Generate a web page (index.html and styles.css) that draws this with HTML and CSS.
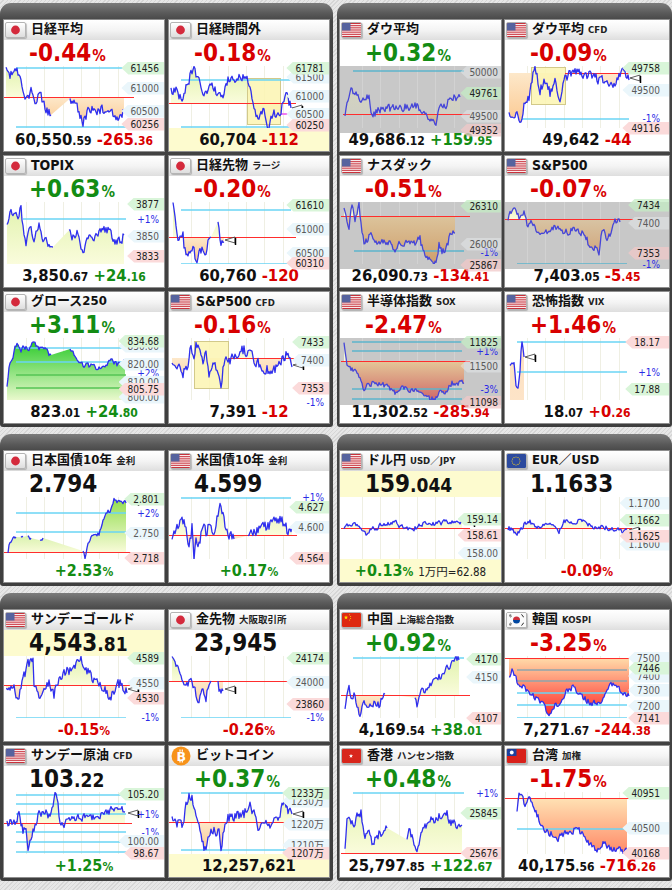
FILE: index.html
```html
<!DOCTYPE html>
<html lang="ja">
<head>
<meta charset="utf-8">
<title>マーケット</title>
<link rel="stylesheet" href="styles.css">
</head>
<body>
<div class="page">

<div class="sec">
 <div class="panel l"><div class="grid">

  <div class="card">
   <div class="hd"><span class="flag jp"><svg viewBox="0 0 19 14"><circle cx="9.5" cy="7" r="4.4" fill="#d42a3c"/></svg></span><span class="ttl">日経平均</span></div>
   <div class="top dn">-0.44<small>%</small></div>
   <div class="chart" data-id="c1">
    <span class="tag l" style="top:61.5px">61000</span><span class="tag l" style="top:84.5px">60500</span><span class="tag g" style="top:41.5px">61456</span><span class="tag p" style="top:97.5px">60256</span>
   </div>
   <div class="bot">60,550<small>.59</small> <span class="dn">-265<small>.36</small></span></div>
  </div>

  <div class="card">
   <div class="hd"><span class="flag jp"><svg viewBox="0 0 19 14"><circle cx="9.5" cy="7" r="4.4" fill="#d42a3c"/></svg></span><span class="ttl">日経時間外</span></div>
   <div class="top dn">-0.18<small>%</small></div>
   <div class="chart" data-id="c2">
    <span class="tag l" style="top:50.5px">61500</span><span class="tag l" style="top:69.5px">61000</span><span class="tag l" style="top:87.5px">60500</span><span class="tag g" style="top:41.5px">61781</span><span class="tag p" style="top:98.5px">60250</span>
   </div>
   <div class="bot yl">60,704 <span class="dn">-112</span></div>
  </div>

  <div class="card">
   <div class="hd"><span class="flag jp"><svg viewBox="0 0 19 14"><circle cx="9.5" cy="7" r="4.4" fill="#d42a3c"/></svg></span><span class="ttl lt">TOPIX</span></div>
   <div class="top up">+0.63<small>%</small></div>
   <div class="chart" data-id="c5">
    <span class="tag b" style="top:56.5px">+1%</span><span class="tag l" style="top:73.5px">3850</span><span class="tag g" style="top:41.5px">3877</span><span class="tag p" style="top:93.5px">3833</span>
   </div>
   <div class="bot">3,850<small>.67</small> <span class="up">+24<small>.16</small></span></div>
  </div>

  <div class="card">
   <div class="hd"><span class="flag jp"><svg viewBox="0 0 19 14"><circle cx="9.5" cy="7" r="4.4" fill="#d42a3c"/></svg></span><span class="ttl">日経先物<span class="sub">ラージ</span></span></div>
   <div class="top dn">-0.20<small>%</small></div>
   <div class="chart" data-id="c6">
    <span class="tag l" style="top:66.5px">61000</span><span class="tag l" style="top:90.5px">60500</span><span class="tag g" style="top:42.5px">61610</span><span class="tag p" style="top:100.5px">60310</span>
   </div>
   <div class="bot">60,760 <span class="dn">-120</span></div>
  </div>

  <div class="card">
   <div class="hd"><span class="flag jp"><svg viewBox="0 0 19 14"><circle cx="9.5" cy="7" r="4.4" fill="#d42a3c"/></svg></span><span class="ttl">グロース250</span></div>
   <div class="top up">+3.11<small>%</small></div>
   <div class="chart" data-id="c9">
    <span class="tag l" style="top:47.5px">830.00</span><span class="tag l" style="top:65.5px">820.00</span><span class="tag b" style="top:74.5px">+2%</span><span class="tag l" style="top:83.5px">810.00</span><span class="tag l" style="top:98.5px">800.00</span><span class="tag g" style="top:42.5px">834.68</span><span class="tag p" style="top:90.5px">805.75</span>
   </div>
   <div class="bot">823<small>.01</small> <span class="up">+24<small>.80</small></span></div>
  </div>

  <div class="card">
   <div class="hd"><span class="flag us"><svg viewBox="0 0 19 14"><rect width="19" height="14" fill="#fff"/><g fill="#c8323c"><rect width="19" height="1.1"/><rect y="2.15" width="19" height="1.1"/><rect y="4.3" width="19" height="1.1"/><rect y="6.45" width="19" height="1.1"/><rect y="8.6" width="19" height="1.1"/><rect y="10.75" width="19" height="1.1"/><rect y="12.9" width="19" height="1.1"/></g><rect width="8.5" height="7.5" fill="#56639e"/></svg></span><span class="ttl lt">S&amp;P500<span class="sub">CFD</span></span></div>
   <div class="top dn">-0.16<small>%</small></div>
   <div class="chart" data-id="c10">
    <span class="tag l" style="top:61.5px">7400</span><span class="tag b" style="top:103.5px">-1%</span><span class="tag g" style="top:43.5px">7433</span><span class="tag p" style="top:89.5px">7353</span>
   </div>
   <div class="bot">7,391 <span class="dn">-12</span></div>
  </div>

 </div></div>

 <div class="panel r"><div class="grid">

  <div class="card">
   <div class="hd"><span class="flag us"><svg viewBox="0 0 19 14"><rect width="19" height="14" fill="#fff"/><g fill="#c8323c"><rect width="19" height="1.1"/><rect y="2.15" width="19" height="1.1"/><rect y="4.3" width="19" height="1.1"/><rect y="6.45" width="19" height="1.1"/><rect y="8.6" width="19" height="1.1"/><rect y="10.75" width="19" height="1.1"/><rect y="12.9" width="19" height="1.1"/></g><rect width="8.5" height="7.5" fill="#56639e"/></svg></span><span class="ttl">ダウ平均</span></div>
   <div class="top up">+0.32<small>%</small></div>
   <div class="chart gy" data-id="c3">
    <span class="tag l" style="top:45.5px">50000</span><span class="tag l" style="top:89.5px">49500</span><span class="tag g" style="top:66.5px">49761</span><span class="tag p" style="top:103.5px">49352</span>
   </div>
   <div class="bot">49,686<small>.12</small> <span class="up">+159<small>.95</small></span></div>
  </div>

  <div class="card">
   <div class="hd"><span class="flag us"><svg viewBox="0 0 19 14"><rect width="19" height="14" fill="#fff"/><g fill="#c8323c"><rect width="19" height="1.1"/><rect y="2.15" width="19" height="1.1"/><rect y="4.3" width="19" height="1.1"/><rect y="6.45" width="19" height="1.1"/><rect y="8.6" width="19" height="1.1"/><rect y="10.75" width="19" height="1.1"/><rect y="12.9" width="19" height="1.1"/></g><rect width="8.5" height="7.5" fill="#56639e"/></svg></span><span class="ttl">ダウ平均<span class="sub">CFD</span></span></div>
   <div class="top dn">-0.09<small>%</small></div>
   <div class="chart" data-id="c4">
    <span class="tag l" style="top:63.5px">49500</span><span class="tag b" style="top:91.5px">-1%</span><span class="tag g" style="top:41.5px">49758</span><span class="tag p" style="top:101.5px">49116</span>
   </div>
   <div class="bot">49,642 <span class="dn">-44</span></div>
  </div>

  <div class="card">
   <div class="hd"><span class="flag us"><svg viewBox="0 0 19 14"><rect width="19" height="14" fill="#fff"/><g fill="#c8323c"><rect width="19" height="1.1"/><rect y="2.15" width="19" height="1.1"/><rect y="4.3" width="19" height="1.1"/><rect y="6.45" width="19" height="1.1"/><rect y="8.6" width="19" height="1.1"/><rect y="10.75" width="19" height="1.1"/><rect y="12.9" width="19" height="1.1"/></g><rect width="8.5" height="7.5" fill="#56639e"/></svg></span><span class="ttl">ナスダック</span></div>
   <div class="top dn">-0.51<small>%</small></div>
   <div class="chart gy" data-id="c7">
    <span class="tag b" style="top:89.5px">-1%</span><span class="tag l" style="top:81.5px">26000</span><span class="tag g" style="top:43.5px">26310</span><span class="tag p" style="top:102.5px">25867</span>
   </div>
   <div class="bot">26,090<small>.73</small> <span class="dn">-134<small>.41</small></span></div>
  </div>

  <div class="card">
   <div class="hd"><span class="flag us"><svg viewBox="0 0 19 14"><rect width="19" height="14" fill="#fff"/><g fill="#c8323c"><rect width="19" height="1.1"/><rect y="2.15" width="19" height="1.1"/><rect y="4.3" width="19" height="1.1"/><rect y="6.45" width="19" height="1.1"/><rect y="8.6" width="19" height="1.1"/><rect y="10.75" width="19" height="1.1"/><rect y="12.9" width="19" height="1.1"/></g><rect width="8.5" height="7.5" fill="#56639e"/></svg></span><span class="ttl lt">S&amp;P500</span></div>
   <div class="top dn">-0.07<small>%</small></div>
   <div class="chart gy" data-id="c8">
    <span class="tag l" style="top:60.5px">7400</span><span class="tag b" style="top:101.5px">-1%</span><span class="tag g" style="top:42.5px">7434</span><span class="tag p" style="top:90.5px">7353</span>
   </div>
   <div class="bot">7,403<small>.05</small> <span class="dn">-5<small>.45</small></span></div>
  </div>

  <div class="card">
   <div class="hd"><span class="flag us"><svg viewBox="0 0 19 14"><rect width="19" height="14" fill="#fff"/><g fill="#c8323c"><rect width="19" height="1.1"/><rect y="2.15" width="19" height="1.1"/><rect y="4.3" width="19" height="1.1"/><rect y="6.45" width="19" height="1.1"/><rect y="8.6" width="19" height="1.1"/><rect y="10.75" width="19" height="1.1"/><rect y="12.9" width="19" height="1.1"/></g><rect width="8.5" height="7.5" fill="#56639e"/></svg></span><span class="ttl">半導体指数<span class="sub">SOX</span></span></div>
   <div class="top dn">-2.47<small>%</small></div>
   <div class="chart gy" data-id="c11">
    <span class="tag b" style="top:52.5px">+1%</span><span class="tag l" style="top:67.5px">11500</span><span class="tag b" style="top:90.5px">-3%</span><span class="tag g" style="top:43.5px">11825</span><span class="tag p" style="top:103.5px">11098</span>
   </div>
   <div class="bot">11,302<small>.52</small> <span class="dn">-285<small>.94</small></span></div>
  </div>

  <div class="card">
   <div class="hd"><span class="flag us"><svg viewBox="0 0 19 14"><rect width="19" height="14" fill="#fff"/><g fill="#c8323c"><rect width="19" height="1.1"/><rect y="2.15" width="19" height="1.1"/><rect y="4.3" width="19" height="1.1"/><rect y="6.45" width="19" height="1.1"/><rect y="8.6" width="19" height="1.1"/><rect y="10.75" width="19" height="1.1"/><rect y="12.9" width="19" height="1.1"/></g><rect width="8.5" height="7.5" fill="#56639e"/></svg></span><span class="ttl">恐怖指数<span class="sub">VIX</span></span></div>
   <div class="top dn">+1.46<small>%</small></div>
   <div class="chart" data-id="c12">
    <span class="tag b" style="top:73.5px">+1%</span><span class="tag p" style="top:43.5px">18.17</span><span class="tag g" style="top:90.5px">17.88</span>
   </div>
   <div class="bot">18<small>.07</small> <span class="dn">+0<small>.26</small></span></div>
  </div>

 </div></div>
</div>

<div class="sec">
 <div class="panel l"><div class="grid">

  <div class="card">
   <div class="hd"><span class="flag jp"><svg viewBox="0 0 19 14"><circle cx="9.5" cy="7" r="4.4" fill="#d42a3c"/></svg></span><span class="ttl">日本国債10年<span class="sub">金利</span></span></div>
   <div class="top">2.794</div>
   <div class="chart" data-id="c13">
    <span class="tag b" style="top:55.5px">+2%</span><span class="tag l" style="top:75.5px">2.750</span><span class="tag g" style="top:41.5px">2.801</span><span class="tag p" style="top:100.5px">2.718</span>
   </div>
   <div class="bot pc up">+2.53<small>%</small></div>
  </div>

  <div class="card">
   <div class="hd"><span class="flag us"><svg viewBox="0 0 19 14"><rect width="19" height="14" fill="#fff"/><g fill="#c8323c"><rect width="19" height="1.1"/><rect y="2.15" width="19" height="1.1"/><rect y="4.3" width="19" height="1.1"/><rect y="6.45" width="19" height="1.1"/><rect y="8.6" width="19" height="1.1"/><rect y="10.75" width="19" height="1.1"/><rect y="12.9" width="19" height="1.1"/></g><rect width="8.5" height="7.5" fill="#56639e"/></svg></span><span class="ttl">米国債10年<span class="sub">金利</span></span></div>
   <div class="top">4.599</div>
   <div class="chart" data-id="c14">
    <span class="tag b" style="top:39.5px">+1%</span><span class="tag l" style="top:69.5px">4.600</span><span class="tag g" style="top:49.5px">4.627</span><span class="tag p" style="top:100.5px">4.564</span>
   </div>
   <div class="bot pc up">+0.17<small>%</small></div>
  </div>

 </div></div>

 <div class="panel r"><div class="grid">

  <div class="card">
   <div class="hd"><span class="flag us"><svg viewBox="0 0 19 14"><rect width="19" height="14" fill="#fff"/><g fill="#c8323c"><rect width="19" height="1.1"/><rect y="2.15" width="19" height="1.1"/><rect y="4.3" width="19" height="1.1"/><rect y="6.45" width="19" height="1.1"/><rect y="8.6" width="19" height="1.1"/><rect y="10.75" width="19" height="1.1"/><rect y="12.9" width="19" height="1.1"/></g><rect width="8.5" height="7.5" fill="#56639e"/></svg></span><span class="ttl">ドル円<span class="sub">USD／JPY</span></span></div>
   <div class="top yl">159<small class="fr">.044</small></div>
   <div class="chart" data-id="c15">
    <span class="tag l" style="top:95.5px">158.00</span><span class="tag g" style="top:61.5px">159.14</span><span class="tag p" style="top:77.5px">158.61</span>
   </div>
   <div class="bot pc yl"><span class="up">+0.13<small>%</small></span> <span class="yen">1万円=62.88</span></div>
  </div>

  <div class="card">
   <div class="hd"><span class="flag eu"><svg viewBox="0 0 19 14"><rect width="19" height="14" fill="#2c4a9e"/><g fill="#f4d020"><circle cx="13" cy="7" r=".6"/><circle cx="12.46" cy="9" r=".6"/><circle cx="11" cy="10.46" r=".6"/><circle cx="9" cy="11" r=".6"/><circle cx="7" cy="10.46" r=".6"/><circle cx="5.54" cy="9" r=".6"/><circle cx="5" cy="7" r=".6"/><circle cx="5.54" cy="5" r=".6"/><circle cx="7" cy="3.54" r=".6"/><circle cx="9" cy="3" r=".6"/><circle cx="11" cy="3.54" r=".6"/><circle cx="12.46" cy="5" r=".6"/></g></svg></span><span class="ttl">EUR／USD</span></div>
   <div class="top">1.1633</div>
   <div class="chart" data-id="c16">
    <span class="tag l" style="top:45.5px">1.1700</span><span class="tag l" style="top:86.5px">1.1600</span><span class="tag g" style="top:62.5px">1.1662</span><span class="tag p" style="top:78.5px">1.1625</span>
   </div>
   <div class="bot pc dn">-0.09<small>%</small></div>
  </div>

 </div></div>
</div>

<div class="sec">
 <div class="panel l"><div class="grid">

  <div class="card">
   <div class="hd"><span class="flag us"><svg viewBox="0 0 19 14"><rect width="19" height="14" fill="#fff"/><g fill="#c8323c"><rect width="19" height="1.1"/><rect y="2.15" width="19" height="1.1"/><rect y="4.3" width="19" height="1.1"/><rect y="6.45" width="19" height="1.1"/><rect y="8.6" width="19" height="1.1"/><rect y="10.75" width="19" height="1.1"/><rect y="12.9" width="19" height="1.1"/></g><rect width="8.5" height="7.5" fill="#56639e"/></svg></span><span class="ttl">サンデーゴールド</span></div>
   <div class="top yl">4,543<small class="fr">.81</small></div>
   <div class="chart" data-id="c17">
    <span class="tag l" style="top:66.5px">4550</span><span class="tag b" style="top:100.5px">-1%</span><span class="tag g" style="top:41.5px">4589</span><span class="tag p" style="top:81.5px">4530</span>
   </div>
   <div class="bot pc dn">-0.15<small>%</small></div>
  </div>

  <div class="card">
   <div class="hd"><span class="flag jp"><svg viewBox="0 0 19 14"><circle cx="9.5" cy="7" r="4.4" fill="#d42a3c"/></svg></span><span class="ttl">金先物<span class="sub">大阪取引所</span></span></div>
   <div class="top">23,945</div>
   <div class="chart" data-id="c18">
    <span class="tag l" style="top:65.5px">24000</span><span class="tag b" style="top:100.5px">-1%</span><span class="tag g" style="top:41.5px">24174</span><span class="tag p" style="top:87.5px">23860</span>
   </div>
   <div class="bot pc dn">-0.26<small>%</small></div>
  </div>

  <div class="card">
   <div class="hd"><span class="flag us"><svg viewBox="0 0 19 14"><rect width="19" height="14" fill="#fff"/><g fill="#c8323c"><rect width="19" height="1.1"/><rect y="2.15" width="19" height="1.1"/><rect y="4.3" width="19" height="1.1"/><rect y="6.45" width="19" height="1.1"/><rect y="8.6" width="19" height="1.1"/><rect y="10.75" width="19" height="1.1"/><rect y="12.9" width="19" height="1.1"/></g><rect width="8.5" height="7.5" fill="#56639e"/></svg></span><span class="ttl">サンデー原油<span class="sub">CFD</span></span></div>
   <div class="top">103<small class="fr">.22</small></div>
   <div class="chart" data-id="c21">
    <span class="tag b" style="top:61.5px">+1%</span><span class="tag b" style="top:79.5px">-1%</span><span class="tag l" style="top:88.5px">100.00</span><span class="tag g" style="top:41.5px">105.20</span><span class="tag p" style="top:100.5px">98.67</span>
   </div>
   <div class="bot pc up">+1.25<small>%</small></div>
  </div>

  <div class="card">
   <div class="hd"><span class="btc"><svg viewBox="0 0 20 20"><circle cx="10" cy="10" r="9.5" fill="#f7931a"/><text x="10.3" y="14.6" text-anchor="middle">B</text><path d="M9 3.6v2.2M11.3 3.6v2.2M9 14.2v2.2M11.3 14.2v2.2" stroke="#fff" stroke-width="1.2"/></svg></span><span class="ttl">ビットコイン</span></div>
   <div class="top up">+0.37<small>%</small></div>
   <div class="chart" data-id="c22">
    <span class="tag l" style="top:48.5px">1230万</span><span class="tag l" style="top:71.5px">1220万</span><span class="tag l" style="top:92.5px">1210万</span><span class="tag g" style="top:40.5px">1233万</span><span class="tag p" style="top:100.5px">1207万</span>
   </div>
   <div class="bot yl">12,257,621</div>
  </div>

 </div></div>

 <div class="panel r"><div class="grid">

  <div class="card">
   <div class="hd"><span class="flag cn"><svg viewBox="0 0 19 14"><rect width="19" height="14" fill="#de2910"/><polygon fill="#ffde00" points="4,2.3 4.53,3.77 6.09,3.82 4.86,4.78 5.29,6.28 4,5.4 2.71,6.28 3.14,4.78 1.91,3.82 3.47,3.77"/><g fill="#ffde00"><circle cx="7.6" cy="1.8" r=".5"/><circle cx="8.6" cy="3.4" r=".5"/><circle cx="8.6" cy="5.4" r=".5"/><circle cx="7.6" cy="6.9" r=".5"/></g></svg></span><span class="ttl">中国<span class="sub">上海総合指数</span></span></div>
   <div class="top up">+0.92<small>%</small></div>
   <div class="chart" data-id="c19">
    <span class="tag l" style="top:60.5px">4150</span><span class="tag g" style="top:42.5px">4170</span><span class="tag p" style="top:101.5px">4107</span>
   </div>
   <div class="bot">4,169<small>.54</small> <span class="up">+38<small>.01</small></span></div>
  </div>

  <div class="card">
   <div class="hd"><span class="flag kr"><svg viewBox="0 0 19 14"><rect width="19" height="14" fill="#fafafa"/><path d="M6 7a3.5 3.5 0 0 1 7 0z" fill="#cd2e3a"/><path d="M6 7a3.5 3.5 0 0 0 7 0z" fill="#0047a0"/><g stroke="#222" stroke-width=".7"><path d="M2 2.6l1.6-1.2M2.6 3.4l1.6-1.2M3.2 4.2l1.6-1.2"/><path d="M14.2 1.4l1.6 1.2M14.8 2.2l1.6 1.2M15.4 3l1.6 1.2"/><path d="M2 11.4l1.6 1.2M2.6 10.6l1.6 1.2M3.2 9.8l1.6 1.2"/><path d="M14.2 12.6l1.6-1.2M14.8 11.8l1.6-1.2M15.4 11l1.6-1.2"/></g></svg></span><span class="ttl">韓国<span class="sub">KOSPI</span></span></div>
   <div class="top dn">-3.25<small>%</small></div>
   <div class="chart" data-id="c20">
    <span class="tag l" style="top:41.5px">7500</span><span class="tag l" style="top:59.5px">7400</span><span class="tag l" style="top:73.5px">7300</span><span class="tag l" style="top:89.5px">7200</span><span class="tag g" style="top:51.5px">7446</span><span class="tag p" style="top:101.5px">7141</span>
   </div>
   <div class="bot">7,271<small>.67</small> <span class="dn">-244<small>.38</small></span></div>
  </div>

  <div class="card">
   <div class="hd"><span class="flag hk"><svg viewBox="0 0 19 14"><rect width="19" height="14" fill="#d8261c"/><polygon fill="#fff" points="9,4.8 9.53,6.27 11.09,6.32 9.86,7.28 10.29,8.78 9,7.9 7.71,8.78 8.14,7.28 6.91,6.32 8.47,6.27"/></svg></span><span class="ttl">香港<span class="sub">ハンセン指数</span></span></div>
   <div class="top up">+0.48<small>%</small></div>
   <div class="chart" data-id="c23">
    <span class="tag b" style="top:40.5px">+1%</span><span class="tag g" style="top:60.5px">25845</span><span class="tag p" style="top:100.5px">25676</span>
   </div>
   <div class="bot">25,797<small>.85</small> <span class="up">+122<small>.67</small></span></div>
  </div>

  <div class="card">
   <div class="hd"><span class="flag tw"><svg viewBox="0 0 19 14"><rect width="19" height="14" fill="#d8201a"/><rect width="9.5" height="7" fill="#1c3f9c"/><circle cx="4.75" cy="3.5" r="1.9" fill="#fff"/></svg></span><span class="ttl">台湾<span class="sub">加権</span></span></div>
   <div class="top dn">-1.75<small>%</small></div>
   <div class="chart" data-id="c24">
    <span class="tag l" style="top:75.5px">40500</span><span class="tag g" style="top:40.5px">40951</span><span class="tag p" style="top:100.5px">40168</span>
   </div>
   <div class="bot">40,175<small>.56</small> <span class="dn">-716<small>.26</small></span></div>
  </div>

 </div></div>
</div>

<div class="tail"></div>
</div>
<script src="script.js"></script>
</body>
</html>
```

FILE: styles.css
```css
* { box-sizing: border-box; }
html, body { margin: 0; padding: 0; }
body {
  width: 672px;
  height: 890px;
  overflow: hidden;
  background: repeating-linear-gradient(135deg, #e7e7e7 0 2px, #d6d6d6 2px 3px);
  font-family: "DejaVu Sans Condensed", "DejaVu Sans", "Noto Sans CJK JP", sans-serif;
  color: #111;
}
.page { padding-top: 3px; }
.sec {
  display: grid;
  grid-template-columns: 333px 335px;
  column-gap: 4px;
  margin-bottom: 7px;
  align-items: start;
}
.panel {
  border-radius: 11px 11px 3px 3px;
  padding: 16px 3px 3px;
  background: linear-gradient(180deg, #7c7c7c 0, #5a5a5a 10px, #454545 18px, #3e3e3e 100%);
}
.panel.r { padding-left: 2px; padding-right: 2px; }
.grid {
  display: grid;
  grid-template-columns: 162px 162px;
  gap: 3px;
}
.panel.r .grid { grid-template-columns: 163px 166px; column-gap: 2px; }

.card {
  position: relative;
  height: 133px;
  background: #fff;
  border: 1px solid #8e8e8e;
  display: flex;
  flex-direction: column;
  overflow: hidden;
}
.hd {
  height: 20px;
  flex: none;
  display: flex;
  align-items: flex-start;
  background: linear-gradient(#ffffff, #f4f4f4 50%, #dedede);
}
.flag {
  flex: none;
  width: 21px;
  height: 16px;
  margin: 2px 5px 0 1px;
  border: 1px solid #b4b4b4;
  border-radius: 2px;
  box-shadow: 1px 1px 1px rgba(0, 0, 0, .22);
  overflow: hidden;
  background: #fff;
}
.flag.jp { background: linear-gradient(#ffffff, #dedede); }
.flag svg { display: block; width: 19px; height: 14px; }
.btc { flex: none; width: 20px; height: 20px; margin: 0 5px 0 2px; }
.btc svg { display: block; width: 20px; height: 20px; }
.btc text { font-family: "DejaVu Sans", sans-serif; font-weight: 700; font-size: 12.5px; fill: #fff; }
.ttl {
  font-family: "DejaVu Sans Condensed", "DejaVu Sans", "Noto Sans CJK JP", sans-serif;
  font-weight: 700;
  font-size: 13px;
  line-height: 18px;
  white-space: nowrap;
  color: #111;
}
.ttl.lt { font-size: 14px; }
.sub { font-size: 9.5px; margin-left: 4px; color: #222; }

.top {
  flex: none;
  height: 26px;
  line-height: 26px;
  padding-left: 25px;
  font-weight: 700;
  font-size: 24px;
  white-space: nowrap;
}
.top small { font-size: 15px; margin-left: 1px; }
.top small.fr { font-size: 19px; margin-left: 0; }
.yl { background: #fdfbcf; }

.chart { flex: none; height: 62px; }
.chart svg { display: block; }
.chart.gy { background: #c8c8c8; box-shadow: 0 5px 0 #c8c8c8; }

.tag {
  position: absolute;
  right: 0;
  height: 13px;
  line-height: 13px;
  font-size: 10px;
  padding: 0 5px 0 9px;
  color: #222;
  white-space: nowrap;
  clip-path: polygon(7px 0, 100% 0, 100% 100%, 7px 100%, 0 50%);
}
.panel.r .card:nth-child(odd) .tag { padding-right: 3px; }
.panel.r .card:nth-child(even) .tag { padding-right: 9px; }
.tag.g { background: #d9f5d9; }
.tag.p { background: #fbdada; }
.tag.l { background: #eaf6fb; color: #5a5a5a; }
.tag.b { background: none; clip-path: none; color: #2a2ae6; }
.gy .tag.l { background: rgba(232, 238, 240, .45); }
.gy .tag.g { background: rgba(196, 236, 196, .75); }
.gy .tag.p { background: rgba(240, 200, 200, .75); }
.gy .tag.b { background: none; }

.bot {
  flex: 1;
  text-align: center;
  line-height: 23px;
  font-weight: 700;
  font-size: 16.5px;
  white-space: nowrap;
}
.bot small { font-size: 12px; }
.bot.pc { font-size: 16px; }
.yen { font-weight: 400; font-size: 11.5px; color: #222; }
.up { color: #138c13; }
.dn { color: #d80000; }
.tail { margin: 6px 0 0 420px; height: 4px; background: #333; }
```

FILE: script.js
```js
(function () {
  var NS = 'http://www.w3.org/2000/svg';
  var D = {
    c1: {ref: 31, rx: [0, 130], h: [[2], [61]], n: 3.5,
      s: [[[2,6],[6,10],[10,4],[13,2],[17,14],[22,34],[27,24],[30,39],[35,24],[40,39],[47,49]],[[66,34],[72,40],[79,57],[85,42],[97,44],[106,44],[114,51],[120,44]]]},
    c2: {ref: 37, rx: [0, 127], h: [[14], [61]], pk: [48, 112], rect: [78, 12, 33, 46], mk: [123, 42], n: 3.5,
      s: [[[2,26],[5,22],[14,34],[17,21],[24,2],[29,11],[35,27],[45,21],[52,34],[59,13],[72,12],[78,8],[80,21],[85,44],[90,51],[95,44],[99,59],[105,47],[110,52],[114,34],[118,29],[122,42]]]},
    c3: {ref: 48, rx: [3, 130], gray: 1, h: [[5, 0, 13, 124]], n: 3, up: ['#d8d8bc', '#cfcfc4'], dn: ['#d8c0a0', '#cfa676'],
      s: [[[5,51],[10,24],[20,34],[29,31],[32,49],[40,44],[64,41],[77,39],[84,47],[89,52],[96,59],[99,39],[104,42],[112,31],[120,31]]]},
    c4: {ref: 7, rx: [60, 170], h: [[53, 0, 17, 124]], rect: [26, 1, 34, 37], mk: [125, 12], n: 3.5,
      s: [[[4,47],[12,51],[15,59],[19,37],[24,34],[27,14],[30,2],[35,24],[40,14],[45,27],[50,15],[55,37],[59,11],[65,9],[75,5],[88,12],[99,14],[107,22],[114,12],[119,2],[124,14]]]},
    c5: {ref: 62, rx: [0, 128], h: [[17, 0, 19, 122]], n: 3.5,
      s: [[[3,26],[7,5],[12,15],[17,8],[20,31],[22,45],[25,25],[30,36],[35,23],[39,38],[44,41],[49,45]],[[65,27],[69,35],[74,28],[79,53],[84,38],[90,35],[97,28],[105,26],[112,41],[117,38],[120,33]]]},
    c6: {ref: 35, rx: [0, 127], h: [[8], [62]], mk: [56, 38], n: 3.5,
      s: [[[4,3],[7,25],[10,38],[14,28],[15,48],[19,53],[24,45],[27,60],[32,48],[37,53],[40,38],[42,35]],[[49,23],[52,41],[55,40]]]},
    c7: {ref: 14, rx: [1, 130], gray: 1, h: [[49, 0, 14, 124]], dn: ['#dcc49c', '#cf9e6a'], n: 3,
      s: [[[4,6],[9,26],[12,5],[15,20],[19,3],[20,15],[24,40],[30,33],[37,40],[47,38],[55,50],[60,38],[70,41],[80,38],[85,51],[90,56],[95,62],[99,43],[104,51],[109,36],[115,31]]]},
    c8: {ref: 17, rx: [0, 128], gray: 1, h: [[62]], dn: ['#d8c4a4', '#cf9e70'], n: 2.5,
      s: [[[3,18],[7,8],[10,3],[14,15],[19,10],[22,23],[29,20],[32,31],[45,28],[52,25],[62,31],[72,26],[80,33],[85,45],[90,46],[94,51],[97,26],[102,38],[107,28],[110,20],[115,20]]]},
    c9: {ref: 64, rx: [0, 128], h: [[10], [24], [37, '#55c455'], [50, '#55c455']], up: ['#22c822', '#f0fad2'], n: 2,
      s: [[[3,50],[5,27],[9,17],[13,5],[17,12],[20,9],[24,12],[27,7],[30,4],[33,9],[37,10],[42,12],[47,17]],[[66,12],[67,12],[72,17],[77,27],[84,27],[90,29],[97,29],[107,24],[114,26],[121,23]]]},
    c10: {ref: 20, rx: [59, 170], h: [[64]], rect: [25, 3, 34, 47], mk: [124, 27], n: 4,
      s: [[[3,27],[9,27],[14,37],[17,32],[22,10],[25,27],[27,5],[30,4],[34,30],[37,14],[40,40],[45,24],[49,37],[52,47],[56,19],[62,22],[69,14],[75,12],[82,19],[89,24],[95,30],[102,32],[109,30],[114,22],[118,17],[123,29]]]},
    c11: {ref: 23, rx: [1, 130], gray: 1, h: [[4], [13], [51], [61]], dn: ['#e4c898', '#d06868'], n: 2,
      s: [[[4,4],[7,25],[10,30],[15,34],[20,42],[24,50],[29,45],[37,47],[47,47],[55,55],[64,50],[77,54],[87,60],[95,62],[99,52],[104,57],[112,45],[124,45]]]},
    c12: {ref: 64, rx: [0, 129], h: [[4], [34]], up: ['#fde0c0', '#fde4c8'], n: 1, mk: [20, 19],
      s: [[[5,27],[9,24],[11,47],[13,50],[15,34],[16,14],[17,4],[19,19]]]},
    c13: {ref: 55, rx: [0, 128], h: [[16], [35]], up: ['#8edc4a', '#f8fbd8'], mk: [124, 4], n: 1.5,
      s: [[[4,55],[6,44],[9,41],[12,40]],[[17,39],[19,40]],[[24,40],[27,41]],[[36,42],[39,41]],[[79,53],[81,60],[85,45],[90,37],[95,37],[99,24],[102,17],[107,12],[110,2],[114,5],[117,4],[122,6]]]},
    c14: {ref: 38, rx: [0, 128], h: [[1]], mk: [124, 30], n: 4,
      s: [[[3,39],[5,32],[10,27],[15,24],[17,34],[20,52],[23,30],[25,59],[27,37],[30,49],[34,24],[37,37],[40,27],[45,34],[51,10],[54,17],[56,30],[60,40],[65,42]],[[79,35],[89,34],[99,29],[109,22],[115,25],[119,35],[123,29]]]},
    c15: {ref: 31, rx: [1, 130], mk: [124, 25], n: 1.8,
      s: [[[4,30],[17,28],[22,34],[25,37],[30,34],[40,29],[50,27],[55,24],[59,29],[70,33],[77,30],[85,25],[97,27],[107,25],[115,24],[122,25]]]},
    c16: {ref: 31, rx: [0, 127], mk: [124, 33], n: 1.8,
      s: [[[3,31],[9,34],[14,37],[19,27],[25,25],[32,30],[40,26],[49,29],[54,36],[59,25],[65,24],[79,25],[89,30],[102,31],[112,33],[119,35],[123,34]]]},
    c17: {ref: 29, rx: [0, 128], h: [[62]], mk: [124, 33], n: 3.5,
      s: [[[2,28],[5,35],[10,32],[14,42],[19,25],[24,7],[29,5],[30,28],[35,40],[40,32],[45,25],[50,38],[55,20],[64,15],[70,12],[77,2],[82,12],[87,20],[94,28],[100,32],[107,42],[112,30],[117,27],[123,37]]]},
    c18: {ref: 25, rx: [0, 127], h: [[62]], mk: [56, 33], n: 3,
      s: [[[3,2],[5,7],[9,15],[14,22],[17,28],[22,25],[27,37],[30,45],[34,35],[37,42],[40,28],[42,25]],[[49,22],[50,38],[54,35]]]},
    c19: {ref: 39, rx: [1, 130], h: [[2, 0, 13, 124]], n: 3,
      s: [[[5,55],[9,30],[12,45],[15,38],[17,53],[20,61],[24,48],[29,52],[34,45],[39,48],[42,42],[45,38]],[[75,38],[77,47],[82,35],[87,32],[94,25],[99,22],[104,15],[109,10],[114,3],[119,4]]]},
    c20: {ref: 2, rx: [0, 170], h: [[14, '#8fa4ac'], [25, '#8fa4ac'], [37], [49], [62]], dn: ['#ffdcaa', '#ff2424'], n: 2,
      s: [[[4,22],[7,13],[12,25],[19,32],[24,35],[32,43],[39,50],[44,61],[49,50],[55,47],[62,35],[69,30],[75,38],[85,47],[92,47],[99,42],[105,28],[112,32],[119,37],[124,40]]]},
    c21: {ref: 31, rx: [0, 128], h: [[3], [12], [22], [40], [50], [60]], mk: [124, 21], n: 3,
      s: [[[3,32],[7,28],[12,30],[15,21],[19,40],[22,36],[24,60],[27,46],[30,36],[34,23],[39,20],[44,23],[49,17],[51,2],[54,15],[56,30],[60,37],[64,26],[74,25],[84,25],[94,23],[104,21],[112,14],[117,18],[121,20]]]},
    c22: {ref: 30, rx: [0, 128], h: [[1], [58]], mk: [124, 22], n: 4,
      s: [[[3,28],[9,31],[14,33],[17,13],[20,6],[23,2],[25,15],[29,31],[32,40],[35,60],[40,43],[45,38],[50,40],[52,53],[56,31],[62,23],[69,23],[75,21],[80,11],[85,23],[89,40],[95,31],[102,31],[109,25],[115,13],[119,18],[123,22]]]},
    c23: {ref: 61, rx: [1, 130], h: [[1, 0, 13, 124]], n: 3.5,
      s: [[[5,58],[7,28],[10,25],[13,36],[17,26],[21,21],[25,43],[29,33],[32,53],[37,43],[42,40],[47,36]],[[67,48],[70,38],[74,50],[77,58],[82,40],[87,31],[94,28],[100,25],[107,23],[112,31],[117,35],[122,33]]]},
    c24: {ref: 6, rx: [0, 128], h: [[37, 0, 12, 124]], dn: ['#ffe2b4', '#ff8866'], n: 2.5,
      s: [[[12,20],[14,5],[17,2],[20,13],[24,5],[29,13],[32,23],[37,33],[42,40],[49,43],[54,46],[62,40],[69,38],[79,41],[85,53],[92,58],[99,51],[105,55],[112,58],[119,60],[122,60]]]}
  };

  function el(n, a) {
    var e = document.createElementNS(NS, n);
    for (var k in a) e.setAttribute(k, a[k]);
    return e;
  }
  function rnd(s) {
    return function () { s = (s * 16807) % 2147483647; return (s - 1) / 2147483646; };
  }
  function f(v) { return (Math.round(v * 10) / 10).toString(); }

  var charts = document.querySelectorAll('.chart');
  for (var idx = 0; idx < charts.length; idx++) {
    var ch = charts[idx];
    var d = D[ch.getAttribute('data-id')];
    if (!d) continue;
    var w = ch.clientWidth, H = 62, ref = d.ref;
    var svg = el('svg', {width: w, height: H});
    var r = rnd(idx * 7919 + 101);
    var id = 'k' + idx;
    var up = d.up || ['#e0f2ac', '#fafcdc'];
    var dn = d.dn || ['#fde8ca', '#fbc68c'];
    var defs = el('defs', {});
    var gu = el('linearGradient', {id: id + 'u', gradientUnits: 'userSpaceOnUse', x1: 0, y1: 0, x2: 0, y2: ref});
    gu.appendChild(el('stop', {offset: 0, 'stop-color': up[0]}));
    gu.appendChild(el('stop', {offset: 1, 'stop-color': up[1]}));
    var gd = el('linearGradient', {id: id + 'd', gradientUnits: 'userSpaceOnUse', x1: 0, y1: ref, x2: 0, y2: H});
    gd.appendChild(el('stop', {offset: 0, 'stop-color': dn[0]}));
    gd.appendChild(el('stop', {offset: 1, 'stop-color': dn[1]}));
    var cu = el('clipPath', {id: id + 'cu'});
    cu.appendChild(el('rect', {x: 0, y: -20, width: w, height: ref + 20}));
    var cd = el('clipPath', {id: id + 'cd'});
    cd.appendChild(el('rect', {x: 0, y: ref, width: w, height: 100}));
    defs.appendChild(gu); defs.appendChild(gd); defs.appendChild(cu); defs.appendChild(cd);
    svg.appendChild(defs);

    if (d.gray) svg.appendChild(el('rect', {x: 0, y: 0, width: w, height: H, fill: '#c8c8c8'}));
    var gc = d.gray ? '#d2d2d2' : '#efefe3';
    [22, 40, 59, 77, 95, 114].forEach(function (x) {
      svg.appendChild(el('line', {x1: x + .5, x2: x + .5, y1: 0, y2: H, stroke: gc, 'stroke-width': 1}));
    });

    var segs = d.s.map(function (seg) {
      var pts = [], n = 0;
      for (var i = 0; i < seg.length - 1; i++) {
        var a = seg[i], b = seg[i + 1];
        var dx = b[0] - a[0];
        var steps = Math.max(1, Math.round(dx));
        for (var k = 0; k < steps; k++) {
          var t = k / steps;
          var x = a[0] + dx * t;
          var y = a[1] + (b[1] - a[1]) * t;
          n = n * 0.25 + (r() - 0.5) * 2.7 * d.n;
          pts.push([x, Math.max(0.5, Math.min(H + 2, y + n))]);
        }
      }
      var l = seg[seg.length - 1];
      pts.push([l[0], l[1]]);
      return pts;
    });
    var all = [].concat.apply([], segs);
    var p = 'M' + all[0][0] + ',' + ref;
    all.forEach(function (q) { p += 'L' + f(q[0]) + ',' + f(q[1]); });
    p += 'L' + all[all.length - 1][0] + ',' + ref + 'Z';
    svg.appendChild(el('path', {d: p, fill: 'url(#' + id + 'u)', 'clip-path': 'url(#' + id + 'cu)'}));
    svg.appendChild(el('path', {d: p, fill: 'url(#' + id + 'd)', 'clip-path': 'url(#' + id + 'cd)'}));

    if (d.rect) {
      svg.appendChild(el('rect', {x: d.rect[0] + .5, y: d.rect[1] + .5, width: d.rect[2], height: d.rect[3],
        fill: '#fcf4b2', 'fill-opacity': .85, stroke: '#d2c98a', 'stroke-width': 1}));
    }
    (d.h || []).forEach(function (h) {
      var c = h[1] || (d.gray ? '#5cb4cc' : '#6ad5f5');
      svg.appendChild(el('line', {x1: h[2] != null ? h[2] : 12, x2: h[3] != null ? h[3] : 122, y1: h[0], y2: h[0],
        stroke: c, 'stroke-width': 1.6}));
    });
    var rx = d.rx || [0, 130];
    svg.appendChild(el('line', {x1: rx[0], x2: rx[1], y1: ref + .5, y2: ref + .5, stroke: '#ff2d2d', 'stroke-width': 1.2}));
    if (d.pk) {
      svg.appendChild(el('line', {x1: d.pk[1], x2: w, y1: d.pk[0], y2: d.pk[0], stroke: '#f07cf0', 'stroke-width': 2}));
    }
    segs.forEach(function (pts) {
      svg.appendChild(el('polyline', {
        points: pts.map(function (q) { return f(q[0]) + ',' + f(q[1]); }).join(' '),
        fill: 'none', stroke: d.gray ? '#4646d8' : '#2f2fee', 'stroke-width': 1.3, 'stroke-linejoin': 'round'
      }));
    });
    if (d.mk) {
      var mx = d.mk[0], my = d.mk[1];
      svg.appendChild(el('polygon', {points: mx + ',' + my + ' ' + (mx + 10) + ',' + (my - 3) + ' ' + (mx + 10) + ',' + (my + 3),
        fill: 'rgba(255,255,255,.5)', stroke: '#333', 'stroke-width': .8}));
      svg.appendChild(el('line', {x1: mx + 10.5, x2: mx + 10.5, y1: my - 2, y2: my + 5, stroke: '#000', 'stroke-width': 1.5}));
    }
    ch.insertBefore(svg, ch.firstChild);
  }
})();
```
